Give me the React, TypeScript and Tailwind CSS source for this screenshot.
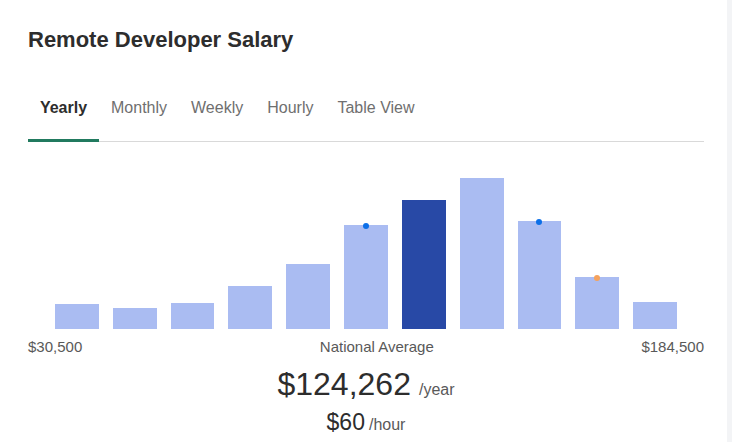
import React from "react";

const bars = [
  { h: 25 }, { h: 21 }, { h: 26 }, { h: 43 }, { h: 65 },
  { h: 104, dot: "#0b6fe8" }, { h: 129, active: true }, { h: 151 },
  { h: 108, dot: "#0b6fe8" }, { h: 52, dot: "#f5a25d" }, { h: 27 },
];

export default function App() {
  return (
    <div className="w-[732px] h-[442px] bg-[#f3f4f6] pr-[5px] overflow-hidden" style={{ fontFamily: "'Liberation Sans', Arial, sans-serif" }}>
      <div className="bg-white h-full pl-[28px] pr-[23px] pt-[26px]">
        <div className="text-[22px] font-bold text-[#2d2d2d] leading-[28px]">Remote Developer Salary</div>
        <div className="mt-[40px] flex border-b border-[#d9d9d9] h-[48px] text-[16px]">
          <div className="w-[71px] text-center font-bold text-[#2d2d2d] border-b-[3px] border-[#217a5f] -mb-px pt-[2px]">Yearly</div>
          <div className="ml-[12px] text-[#6f6f6f] pt-[2px]">Monthly</div>
          <div className="ml-[24px] text-[#6f6f6f] pt-[2px]">Weekly</div>
          <div className="ml-[24px] text-[#6f6f6f] pt-[2px]">Hourly</div>
          <div className="ml-[24px] text-[#6f6f6f] pt-[2px]">Table View</div>
        </div>
        <div className="flex items-end gap-[14px] px-[27px] h-[187px]">
          {bars.map((b, i) => (
            <div key={i} className={`relative w-[44px] ${b.active ? "bg-[#2849a6]" : "bg-[#aabcf2]"}`} style={{ height: b.h }}>
              {b.dot && <div className="absolute left-1/2 -translate-x-1/2 top-[-2px] w-[6px] h-[6px] rounded-full" style={{ background: b.dot }} />}
            </div>
          ))}
        </div>
        <div className="flex justify-between text-[15px] text-[#595959] mt-[9px] leading-[18px]">
          <span>$30,500</span>
          <span className="ml-[30px]">National Average</span>
          <span>$184,500</span>
        </div>
        <div className="text-center text-[#2d2d2d] mt-[10px] leading-[36px]">
          <span className="text-[32px]">$124,262</span>
          <span className="text-[16px] text-[#595959] ml-[8px]">/year</span>
        </div>
        <div className="text-center text-[#2d2d2d] leading-[28px]">
          <span className="text-[23px]">$60</span>
          <span className="text-[16px] text-[#595959] ml-[4px]">/hour</span>
        </div>
      </div>
    </div>
  );
}
